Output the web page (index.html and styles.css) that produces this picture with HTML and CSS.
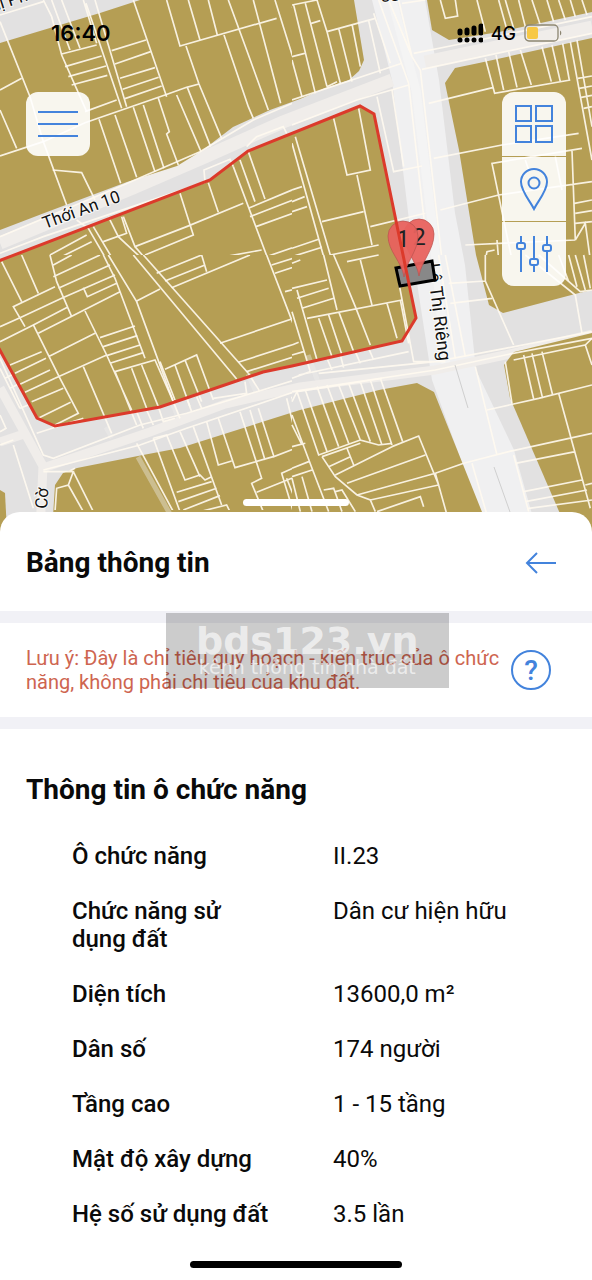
FILE: index.html
```html
<!DOCTYPE html>
<html lang="vi">
<head>
    <meta charset="UTF-8">
    <meta name="viewport" content="width=device-width, initial-scale=1.0">
    <title>Bảng thông tin</title>
    <link rel="stylesheet" href="styles.css">
</head>
<body>
    <section class="map">
        <svg class="map-canvas" viewBox="0 0 592 532" preserveAspectRatio="xMidYMin slice" aria-hidden="true">
            <clipPath id="tileLeft"><rect width="876" height="765"/></clipPath>
            <clipPath id="tileRight"><rect width="900" height="765"/></clipPath>

            <rect class="ground" width="592" height="532"/>

            <!-- roads -->
            <path class="avenue" d="M372 0L392 80 409 220 415 270 432 380 487 532H537L514 450 476 370 465 265 455 213 439 80 425 0Z"/>
            <path class="avenue-core" d="M392 0L416 90 434 240 446 365"/>
            <path class="street wide" d="M0 243L133 188 207 156 283 122 392 80M425 62L592 27"/>
            <path class="street" d="M0 388L43 466 40 532M43 468L150 432 225 404 300 387 435 370 505 355 592 334M0 442L24 434"/>

            <!-- blocks -->
            <g class="block">
                <path d="M0 43L100 13 140 0H354L359 30 364 60 359 71 349 80 325 88 300 99 270 110 233 127 203 150 177 166 127 182 47 212 0 230Z"/>
                <path d="M0 261L210 180 248 151 360 106 374 114 416 318 402 341 292 366 263 372 160 407 55 426 37 418 0 350Z"/>
                <path d="M427 0L432 30 449 40 499 32 592 12V0Z"/>
                <path d="M592 38L479 63 455 68 445 83 459 150 476 255 489 305 503 313 579 293 592 290Z"/>
                <path d="M592 333L514 352 504 365 510 398 529 442 568 532H592Z"/>
                <path d="M490 532L434 392 417 383 379 390 300 410 180 448 143 455 77 468 63 473 55 485 52 532Z"/>
                <path d="M0 490L5 493 7 532H0Z"/>
            </g>

            <!-- alleys inside the blocks -->
            <path class="street thin" d="M138 457L180 532M106 427L112 438M173 405L180 422M248 374L256 392M308 355L318 382"/>

            <!-- parcel borders, four tiles drawn at 3x -->
            <g class="parcels" transform="scale(.3333)" clip-path="url(#tileLeft)">
                <path d="M0 45L130 5M0 65L90 290 130 425 200 615M130 0L155 50 185 165 260 335M155 0L210 150M185 0L240 145M250 0L290 130M258 10L365 325M285 0L380 320M400 0L500 290"/>
                <path d="M185 162L290 135M195 200L305 168M205 230L318 198M215 255L322 226M335 152L438 120M345 192L452 155M360 235L465 203M368 268L476 232M375 296L485 258M255 335L350 300"/>
                <path d="M0 270L65 235M0 330L50 445M0 468L130 425 255 368 495 285 560 262 597 252M297 358L362 550M345 345L410 532M400 322L465 515M430 315L492 505M475 295L508 395 500 402 535 495M530 285L603 455M562 262L632 440M558 138L597 252 665 415"/>
                <path d="M500 0L540 138 830 55M565 0L600 120M625 0L652 105M672 105L745 320 760 355M685 0L740 150 805 330M760 0L842 310M825 0L900 240M900 15L878 22 900 100M880 165L900 162M158 510L245 518 285 600"/>
                <path d="M0 710L370 555 600 455 760 360 900 300M0 760L130 710 620 545M615 545L612 510 690 478 700 500M740 440L770 410 850 380 860 400M540 580L580 705 435 765M625 548L655 637M370 650L405 740 560 680 730 610M405 740L440 780"/>
                <path d="M700 500L805 780M720 480L765 605M745 455L795 597M745 625L900 560M750 650L900 592M768 680L900 632M800 770L900 735M265 685L320 780M280 680L340 780M325 650L355 710 430 780M310 725L380 700 365 650M150 765L260 705M150 765V780M165 780L275 725M60 770L65 780M230 660L265 685M620 780L785 750"/>
            </g>
            <g class="parcels" transform="translate(292 0) scale(.3333)" clip-path="url(#tileRight)">
                <path d="M0 15L75 0M5 15L70 280M40 10L105 260M75 0L105 95 250 55M58 70L85 62M105 95L145 250M140 85L180 245M180 72L205 200M230 62L265 220M245 40L295 190M105 260L135 245M0 170L38 160M0 180L30 290"/>
                <path d="M0 300L330 190M0 375L195 300 350 255M260 0L350 250 410 780M290 0L360 170 385 210 450 780M320 0L360 170M365 160L490 135 900 50M390 208L900 100M330 10L400 0"/>
                <path d="M445 0L460 55 497 48 490 0M555 0L580 95M620 0L645 90M640 0L665 85M680 0L700 80M720 0L745 75M765 0L785 65M800 0L820 60M835 0L850 50M870 0L885 45"/>
                <path d="M580 175L608 280 835 240M410 310L605 262M612 165L635 270M650 155L675 262M685 150L718 255M750 140L778 245M780 135L805 245M812 130L832 240M835 125L900 480M855 120L900 380M858 235L900 228M862 265L900 258M868 292L900 286M875 325L900 320"/>
                <path d="M425 475L630 435 860 400M445 630L620 585 900 545M255 290L305 515 390 498M300 270L335 500M660 780L600 490 870 445M700 480L710 510M790 470L810 570M840 450L850 720M848 610L900 600M850 640L900 632M850 670L900 665M850 720L880 670 895 780M520 735L850 720M580 780L585 755 608 750M615 720L620 780"/>
                <path d="M10 410L115 765M0 430L95 770M125 355L165 525 235 510 200 325M195 525L240 735M90 665L215 635M235 680L400 640M0 570L30 560M0 605L38 590M0 635L45 620M0 745L80 718M0 770L90 742M115 765L260 735"/>
            </g>
            <g class="parcels" transform="translate(0 255) scale(.3333)" clip-path="url(#tileLeft)">
                <path d="M5 20L65 140M65 0L115 115M75 215L40 155 165 95M150 0L170 80 215 185M160 30L215 0M160 65L300 0M175 100L330 30M185 130L345 60M0 215L60 188 185 130M0 260L100 210 205 155M115 235L360 110M250 98L262 125 350 85M310 0L345 70 435 310M325 0L410 140 520 440M400 0L710 372M430 0L745 355"/>
                <path d="M410 138L480 102M470 55L605 0 620 50M495 78L615 30M515 98L750 0M255 168L320 300 395 465M100 210L180 370 235 475 165 510M145 305L285 235M300 248L405 213M310 275L412 242M320 302L420 270M330 325L430 293M410 510L345 350 465 315 520 440M165 370L320 300"/>
                <path d="M30 330L125 290M45 355L138 310M60 388L150 345M75 412L165 370M95 440L190 400M110 492L212 442M250 335L335 535M395 340L440 460M425 330L475 455M495 343L590 300 640 435M525 330L570 455M555 315L605 440M480 320L525 435M660 265L880 190M715 322L900 262M740 350L900 300M800 0L900 260M815 30L880 10M825 55L900 30M855 110L900 98"/>
                <path d="M110 535L250 490M0 310L130 600 160 610 420 510 560 475 900 370M130 645L420 570 560 520 900 405M410 470L430 520M440 465L460 510M475 455L490 500 525 490M520 440L540 490M560 430L575 470M590 425L605 460M640 430L740 415 735 380M745 355L780 410M0 340L60 460M60 460L85 450M30 400L55 388M15 370L40 358M0 530L18 520 0 480M40 570L100 760M0 570L40 555"/>
                <path d="M410 565L520 770M460 550L540 770M460 550L500 540 555 675 600 660 615 675 635 665M540 530L600 665M580 515L665 750M620 500L655 630 695 618M655 490L705 638 820 605M720 470L785 670 755 685 790 770M750 465L795 615M775 460L822 605 900 575M860 430L895 570M875 425L900 500M530 712L635 680M535 740L650 700M550 765L660 722M600 770L680 750 690 770M770 712L900 660M900 630L845 655 880 770M860 670L900 770"/>
                <path d="M130 650H220L205 690 170 700 165 770M220 650L280 770M205 690L250 770M205 650L225 640"/>
            </g>
            <g class="parcels" transform="translate(292 255) scale(.3333)">
                <path d="M0 25L25 15M0 100L105 75M15 130L110 100M30 160L125 130M45 190L330 135M15 105L75 315M0 170L55 350M95 0L135 165M125 0L155 70 190 155M165 20L260 0M205 15L240 150M190 155L235 270M80 190L120 305M110 180L150 300M140 170L185 290M285 145L315 250M325 135L350 265M0 270L20 262M0 300L35 290"/>
                <path d="M20 360L350 290M105 310L120 345M145 300L155 338M190 290L205 325M230 280L245 315M320 80L365 320H460M0 370L55 350M80 355L430 320 640 280 900 230M0 410L430 345 640 300 900 250"/>
                <path d="M440 0L490 310M460 0L520 305M470 85L580 78M475 145L600 130M580 0V78L665 270M700 0L850 120 870 235M740 0L865 110 900 105M800 0L830 80M830 0L855 95M850 0L880 105M875 0L895 100"/>
                <path d="M550 335L615 600M640 320L660 445M695 300L725 432M720 295L752 430M750 290L782 420M585 465L740 430 900 390M665 315L880 270 900 330M880 270L900 250M800 415L895 760M900 535L650 590 515 625 430 655M665 600L710 770M670 625L850 590M695 710L870 675M700 740L885 705M710 760L900 735M540 625L585 780M880 690L900 685"/>
                <path d="M0 440L15 410 80 400 270 370M15 410L80 600 205 555M40 405L105 590M75 395L140 575M105 390L170 565M140 390L205 555 260 570 300 565M170 385L235 560M205 380L270 570M235 375L300 570M265 370L332 560"/>
                <path d="M90 605L205 565M300 575L380 543 440 690 235 735M90 605L130 665 195 720 235 735 250 770M110 635L175 605M130 660L300 575M165 685L400 600M195 720L430 655M165 580L185 630M0 480L60 640 110 770M0 510L30 570M0 575L40 565M0 640L50 620M0 665L60 645M0 670L25 770M30 665L60 770M95 705L125 700 150 770M130 710L150 705 190 770M255 770L385 725 395 755M430 655L465 780"/>
            </g>
            <path class="hairline" d="M455 365L468 408M494 467L510 512"/>

            <!-- street names -->
            <g class="street-name">
                <text transform="translate(45 229) rotate(-20)">Thới An 10</text>
                <text transform="translate(427 264) rotate(83)" class="large">Lê Thị Riêng</text>
                <text transform="translate(47 509) rotate(-86)">Cờ</text>
                <text transform="translate(-17 15) rotate(-18)">Thị Ph</text>
                <text transform="translate(381 2) rotate(-4)">88</text>
            </g>

            <!-- selected parcel, pins and planning boundary -->
            <path class="parcel-picked" d="M396 268L432 261 435 280 400 286Z"/>
            <g class="pin">
                <path d="M419 276C417 262 404 250 404 234A15 15 0 0 1 434 234C434 250 421 262 419 276Z"/>
                <text x="419" y="245">2</text>
                <path d="M404 277C402 262 388 251 388 236A15 15 0 0 1 418 236C418 251 406 262 404 277Z"/>
                <text x="403" y="247">1</text>
            </g>
            <path class="boundary" d="M-4 262L210 180 248 151 360 106 374 114 416 318 402 341 292 366 263 372 160 407 55 426 37 418 -4 343"/>
        </svg>

        <header class="status-bar">
            <span class="status-time">16:40</span>
            <div class="status-icons">
                <svg width="26" height="20" viewBox="0 0 26 20" aria-hidden="true">
                    <g stroke="#000" stroke-width="5" stroke-linecap="round">
                        <path d="M3 8V10M10 7V10M17 5V10M24 3V10M3 17H3.010M10 17H10.010M17 17H17.010M24 17H24.010"/>
                    </g>
                </svg>
                <span>4G</span>
                <svg width="38" height="18" viewBox="0 0 38 18" aria-hidden="true">
                    <rect x="1" y="1" width="33" height="16" rx="4" fill="none" stroke="#8c8672" stroke-width="1.300"/>
                    <rect x="3" y="3" width="11" height="12" rx="2" fill="#f7c844"/>
                    <path d="M36 6.500A3 3 0 0 1 36 11.500Z" fill="#8c8672"/>
                </svg>
            </div>
        </header>

        <div class="map-controls">
            <button type="button" class="map-btn menu-btn" aria-label="Menu">
                <svg width="42" height="30" viewBox="0 0 42 30"><path d="M1 3H41M1 15H41M1 27H41"/></svg>
            </button>
            <div class="toolbar">
                <button type="button" class="map-btn" aria-label="Lớp bản đồ">
                    <svg width="40" height="40" viewBox="0 0 40 40"><path d="M2 2H17V17H2ZM22 2H38V17H22ZM2 22H17V38H2ZM22 22H38V38H22Z"/></svg>
                </button>
                <button type="button" class="map-btn" aria-label="Vị trí">
                    <svg width="30" height="44" viewBox="0 0 30 44"><path d="M15 42C11 34 2 24 2 15A13 13 0 0 1 28 15C28 24 19 34 15 42Z"/><circle cx="15" cy="16" r="5.500"/></svg>
                </button>
                <button type="button" class="map-btn" aria-label="Bộ lọc">
                    <svg width="40" height="40" viewBox="0 0 40 40"><path d="M7 2V9M7 15V38M20 2V25M20 31V38M33 2V11M33 17V38"/><rect x="3" y="9" width="8" height="6" rx="2"/><rect x="16" y="25" width="8" height="6" rx="2"/><rect x="29" y="11" width="8" height="6" rx="2"/></svg>
                </button>
            </div>
        </div>

        <div class="drag-handle"></div>
    </section>

    <main class="sheet">
        <div class="sheet-header">
            <h1>Bảng thông tin</h1>
            <button type="button" class="icon-btn" aria-label="Quay lại">
                <svg width="32" height="24" viewBox="0 0 32 24"><path d="M31 12H2M12 2L2 12 12 22"/></svg>
            </button>
        </div>

        <div class="notice">
            <p>Lưu ý: Đây là chỉ tiêu quy hoạch - kiến trúc của ô chức năng, không phải chỉ tiêu của khu đất.</p>
            <button type="button" class="help-btn" aria-label="Trợ giúp">?</button>
            <div class="watermark">
                <strong>bds123.vn</strong>
                <span>kênh thông tin nhà đất</span>
            </div>
        </div>

        <section class="details">
            <h2>Thông tin ô chức năng</h2>
            <table>
                <tr><th scope="row">Ô chức năng</th><td>II.23</td></tr>
                <tr><th scope="row">Chức năng sử dụng đất</th><td>Dân cư hiện hữu</td></tr>
                <tr><th scope="row">Diện tích</th><td>13600,0 m²</td></tr>
                <tr><th scope="row">Dân số</th><td>174 người</td></tr>
                <tr><th scope="row">Tầng cao</th><td>1 - 15 tầng</td></tr>
                <tr><th scope="row">Mật độ xây dựng</th><td>40%</td></tr>
                <tr><th scope="row">Hệ số sử dụng đất</th><td>3.5 lần</td></tr>
            </table>
        </section>

        <div class="home-indicator"></div>
    </main>
</body>
</html>
```
FILE: styles.css
```css
* {
    box-sizing: border-box;
}

body {
    margin: 0;
    background: #fff;
    color: #0a0a0a;
    font-family: Roboto, "Noto Sans", sans-serif;
}

button {
    display: flex;
    align-items: center;
    justify-content: center;
    padding: 0;
    border: none;
    background: none;
    color: #4383dc;
    cursor: pointer;
}

button svg {
    fill: none;
    stroke: currentColor;
    stroke-width: 2;
}

/* Map */
.map {
    position: relative;
    display: flex;
    flex-direction: column;
    height: 532px;
    overflow: hidden;
}

.map-canvas {
    position: absolute;
    inset: 0;
    width: 100%;
    height: 100%;
}

.ground {
    fill: #e2e1e1;
}

.block {
    fill: #b59e54;
}

.avenue {
    fill: #f0f0f1;
}

.avenue-core,
.street {
    fill: none;
    stroke: #f0edea;
    stroke-width: 9;
}

.avenue-core {
    stroke: #f4f4f4;
}

.street.wide {
    stroke-width: 13;
}

.street.thin {
    stroke-width: 5;
    stroke-opacity: 0.4;
}

.parcels {
    fill: none;
    stroke: #fffaf0;
    stroke-width: 5;
    stroke-opacity: 0.9;
}

.hairline {
    fill: none;
    stroke: #cfcfcf;
}

.street-name {
    font-size: 17px;
    fill: #111;
    stroke: #fff;
    stroke-width: 2;
    stroke-opacity: 0.7;
    paint-order: stroke;
}

.street-name .large {
    font-size: 18px;
}

.parcel-picked {
    fill: #888;
    stroke: #000;
    stroke-width: 3;
}

.pin path {
    fill: #e8625e;
    fill-opacity: 0.95;
    stroke: #b9524e;
    stroke-opacity: 0.7;
}

.pin text {
    font-size: 24px;
    text-anchor: middle;
    fill: #222;
}

.boundary {
    fill: none;
    stroke: #dc3a2b;
    stroke-width: 3;
}

.status-bar {
    position: relative;
    display: flex;
    align-items: center;
    justify-content: space-between;
    height: 66px;
    padding: 0 30px 0 51px;
    color: #000;
    font-family: Inter, sans-serif;
}

.status-time {
    font-size: 22px;
    font-weight: 600;
}

.status-icons {
    display: flex;
    align-items: center;
    gap: 8px;
    font-size: 18px;
    font-weight: 500;
}

.map-controls {
    position: relative;
    display: flex;
    align-items: flex-start;
    justify-content: space-between;
    padding: 26px 26px 0;
}

.map-btn {
    width: 64px;
    height: 64px;
    background: rgba(255, 255, 255, 0.9);
}

.menu-btn {
    border-radius: 12px;
}

.toolbar {
    display: flex;
    flex-direction: column;
    gap: 1px;
    border-radius: 12px;
    overflow: hidden;
}

.drag-handle {
    position: relative;
    width: 106px;
    height: 7px;
    margin: auto auto 26px;
    border-radius: 4px;
    background: #fff;
}

/* Bottom sheet */
.sheet {
    position: relative;
    margin-top: -20px;
    border-radius: 20px 20px 0 0;
    background: #fff;
}

.sheet-header {
    display: flex;
    align-items: center;
    justify-content: space-between;
    height: 99px;
    padding: 2px 35px 0 26px;
}

h1,
h2 {
    margin: 0;
    font-size: 28px;
    font-weight: 700;
    line-height: 32px;
}

.notice {
    position: relative;
    display: flex;
    align-items: center;
    justify-content: space-between;
    gap: 10px;
    padding: 23px 41px 23px 26px;
    border-top: 12px solid #f1f1f6;
    border-bottom: 12px solid #f1f1f6;
}

.notice p {
    margin: 0;
    color: #ce6550;
    font-size: 20px;
    line-height: 24px;
}

.help-btn {
    flex-shrink: 0;
    width: 40px;
    height: 40px;
    border: 2px solid #4383dc;
    border-radius: 50%;
    font-family: inherit;
    font-size: 28px;
    font-weight: 500;
}

.watermark {
    position: absolute;
    top: -10px;
    left: 28%;
    display: flex;
    flex-direction: column;
    align-items: center;
    justify-content: center;
    width: 283px;
    height: 75px;
    background: rgba(0, 0, 0, 0.2);
    color: rgba(255, 255, 255, 0.65);
    font-family: "DejaVu Sans", sans-serif;
    pointer-events: none;
}

.watermark strong {
    font-size: 38px;
    line-height: 32px;
}

.watermark span {
    font-size: 19px;
    line-height: 20px;
}

.details {
    padding: 45px 26px 0;
}

table {
    width: 100%;
    margin-top: 22px;
    border-collapse: collapse;
}

th,
td {
    padding: 14px 0 13px;
    font-size: 24px;
    line-height: 28px;
    text-align: left;
    vertical-align: top;
}

th {
    width: 307px;
    padding-left: 46px;
    padding-right: 58px;
    font-weight: 500;
}

td {
    font-weight: 400;
}

.home-indicator {
    width: 212px;
    height: 7px;
    margin: 20px auto 12px;
    border-radius: 4px;
    background: #000;
}
```
